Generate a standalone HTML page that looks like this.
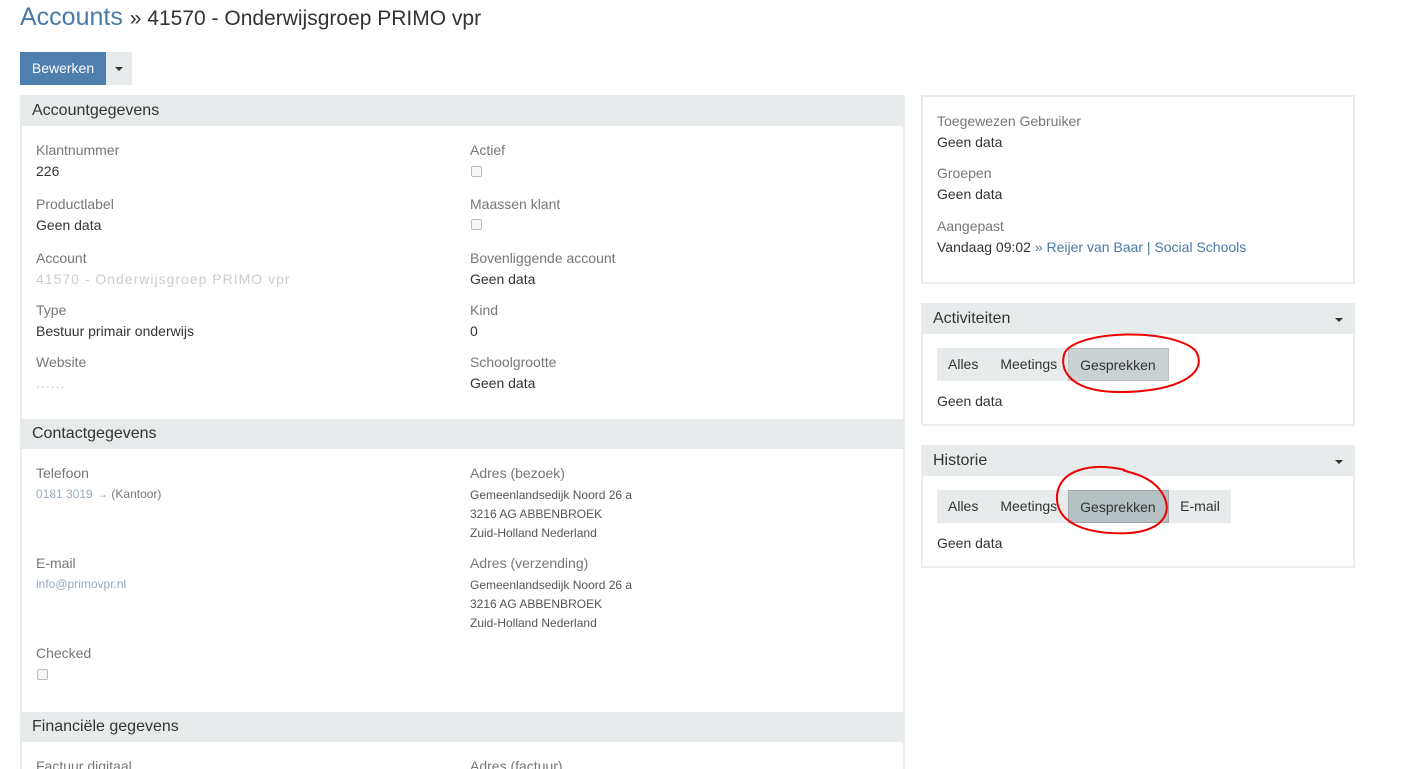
<!DOCTYPE html>
<html style="overflow:hidden;height:769px"><head><meta charset="utf-8"><style>
*{box-sizing:border-box;margin:0;padding:0}
body{width:1428px;height:769px;overflow:hidden;background:#fff;font-family:"Liberation Sans",sans-serif;font-size:14px;color:#333;position:relative}
.a{position:absolute;white-space:nowrap}
.l{color:#777}
.hd{position:absolute;background:#e8ebec;font-size:16px;color:#333;padding-left:12px;line-height:30px;height:30px}
.box{position:absolute;border:2px solid #eaeced;background:#fff}
.cb{position:absolute;width:11px;height:11px;border:1px solid #bbb;border-radius:2px;background:#f7f7f7}
.tabs{position:absolute;background:#e8ebec;height:33px;display:flex}
.tabs span{padding:0 11px;line-height:33px;font-size:14px;color:#333}
.tabs .on{background:#c9d1d3;border:1px solid #b8c0c2}
.caret{position:absolute;width:0;height:0;border-left:4px solid transparent;border-right:4px solid transparent;border-top:4px solid #333}
.red{color:#ccc;letter-spacing:1px}
</style></head><body>
<div class="a" style="left:20px;top:3px;font-size:25px;color:#4a7aa8">Accounts <span style="color:#333;font-size:21px">» 41570 - Onderwijsgroep PRIMO vpr</span></div>
<div class="a" style="left:20px;top:52px;width:86px;height:33px;background:#4f7fae;color:#fff;line-height:33px;text-align:center">Bewerken</div>
<div class="a" style="left:106px;top:52px;width:26px;height:33px;background:#e8ebec"></div>
<div class="caret" style="left:115px;top:67px"></div>

<div class="box" style="left:20px;top:95px;width:885px;height:690px"></div>
<div class="hd" style="left:20px;top:96px;width:884px">Accountgegevens</div>
<div class="hd" style="left:20px;top:419px;width:884px">Contactgegevens</div>
<div class="hd" style="left:20px;top:712px;width:884px">Financiële gegevens</div>

<div class="a l" style="left:36px;top:142px">Klantnummer</div><div class="a" style="left:36px;top:163px">226</div>
<div class="a l" style="left:36px;top:196px">Productlabel</div><div class="a" style="left:36px;top:217px">Geen data</div>
<div class="a l" style="left:36px;top:250px">Account</div><div class="a red" style="left:36px;top:271px">41570 - Onderwijsgroep PRIMO vpr</div>
<div class="a l" style="left:36px;top:302px">Type</div><div class="a" style="left:36px;top:323px">Bestuur primair onderwijs</div>
<div class="a l" style="left:36px;top:354px">Website</div><div class="a red" style="left:36px;top:375px">......</div>
<div class="a l" style="left:470px;top:142px">Actief</div><div class="cb" style="left:471px;top:166px"></div>
<div class="a l" style="left:470px;top:196px">Maassen klant</div><div class="cb" style="left:471px;top:219px"></div>
<div class="a l" style="left:470px;top:250px">Bovenliggende account</div><div class="a" style="left:470px;top:271px">Geen data</div>
<div class="a l" style="left:470px;top:302px">Kind</div><div class="a" style="left:470px;top:323px">0</div>
<div class="a l" style="left:470px;top:354px">Schoolgrootte</div><div class="a" style="left:470px;top:375px">Geen data</div>

<div class="a l" style="left:36px;top:465px">Telefoon</div><div class="a" style="left:36px;top:487px;font-size:12px;color:#777"><span style="color:#9ab">0181 3019 →</span> (Kantoor)</div>
<div class="a l" style="left:36px;top:555px">E-mail</div><div class="a" style="left:36px;top:577px;color:#9ab;font-size:12px">info@primovpr.nl</div>
<div class="a l" style="left:36px;top:645px">Checked</div><div class="cb" style="left:37px;top:669px"></div>
<div class="a l" style="left:470px;top:465px">Adres (bezoek)</div>
<div class="a" style="left:470px;top:486px;font-size:12px;line-height:19px;color:#555">Gemeenlandsedijk Noord 26 a<br>3216 AG ABBENBROEK<br>Zuid-Holland Nederland</div>
<div class="a l" style="left:470px;top:555px">Adres (verzending)</div>
<div class="a" style="left:470px;top:576px;font-size:12px;line-height:19px;color:#555">Gemeenlandsedijk Noord 26 a<br>3216 AG ABBENBROEK<br>Zuid-Holland Nederland</div>
<div class="a l" style="left:36px;top:758px">Factuur digitaal</div><div class="a l" style="left:470px;top:758px">Adres (factuur)</div>

<div class="box" style="left:921px;top:95px;width:434px;height:189px"></div>
<div class="a l" style="left:937px;top:113px">Toegewezen Gebruiker</div><div class="a" style="left:937px;top:134px">Geen data</div>
<div class="a l" style="left:937px;top:165px">Groepen</div><div class="a" style="left:937px;top:186px">Geen data</div>
<div class="a l" style="left:937px;top:218px">Aangepast</div><div class="a" style="left:937px;top:239px">Vandaag 09:02 <span style="color:#4a7aa8">» Reijer van Baar | Social Schools</span></div>

<div class="box" style="left:921px;top:303px;width:434px;height:123px"></div>
<div class="hd" style="left:922px;top:304px;width:432px;padding-left:11px">Activiteiten</div>
<div class="caret" style="left:1335px;top:318px"></div>
<div class="tabs" style="left:937px;top:348px"><span>Alles</span><span>Meetings</span><span class="on" style="width:101px">Gesprekken</span></div>
<div class="a" style="left:937px;top:393px">Geen data</div>

<div class="box" style="left:921px;top:445px;width:434px;height:123px"></div>
<div class="hd" style="left:922px;top:446px;width:432px;padding-left:11px">Historie</div>
<div class="caret" style="left:1335px;top:460px"></div>
<div class="tabs" style="left:937px;top:490px"><span>Alles</span><span>Meetings</span><span class="on" style="width:101px;background:#b5c1c3;border-color:#9aa6a8">Gesprekken</span><span>E-mail</span></div>
<div class="a" style="left:937px;top:535px">Geen data</div>

<svg class="a" style="left:0;top:0" width="1428" height="769">
<path d="M1065 352 C1080 330,1170 328,1195 350 C1210 372,1180 392,1120 392 C1070 392,1058 370,1065 352" fill="none" stroke="#e00" stroke-width="2"/>
<path d="M1125 470 C1090 462,1060 470,1057 495 C1055 525,1090 535,1130 533 C1165 530,1175 510,1160 490 C1148 474,1125 472,1123 470" fill="none" stroke="#e00" stroke-width="2"/>
</svg>
</body></html>
